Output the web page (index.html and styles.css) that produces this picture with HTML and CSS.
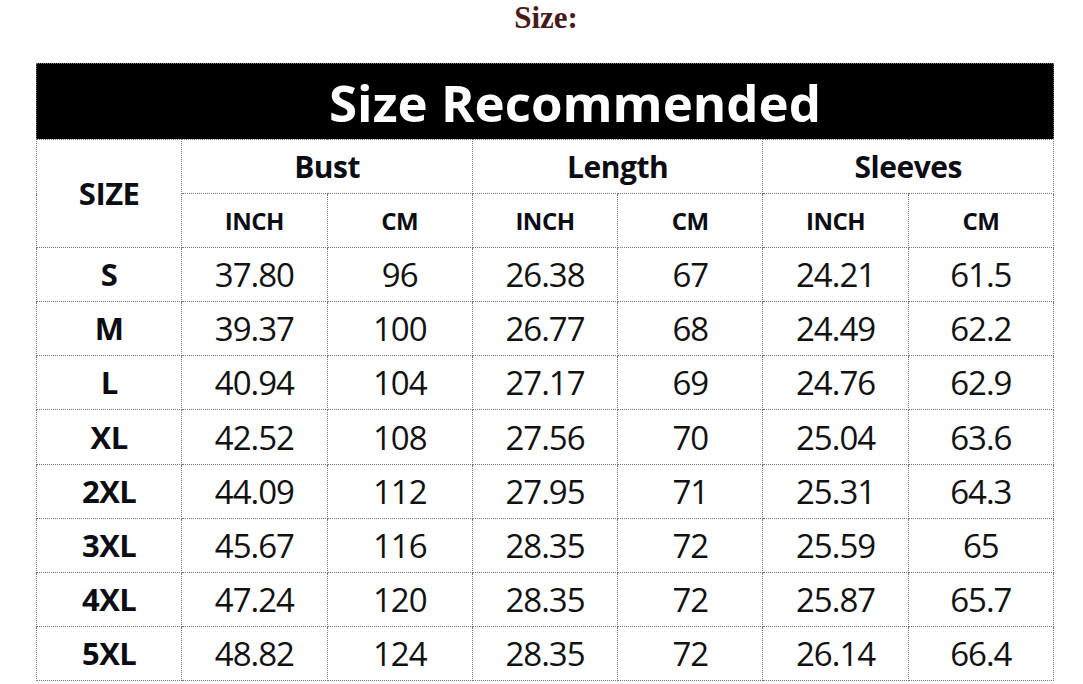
FILE: index.html
```html
<!DOCTYPE html>
<html>
<head>
<meta charset="utf-8">
<link rel="stylesheet" href="styles.css">
</head>
<body>
<h1 class="page-title">Size:</h1>
<div class="chart">
  <div class="band"><span class="band-text">Size Recommended</span></div>
  <table class="size-table">
    <colgroup>
      <col><col><col><col><col><col><col>
    </colgroup>
    <thead>
      <tr class="head1">
        <th rowspan="2" class="lbl-size">SIZE</th>
        <th colspan="2">Bust</th>
        <th colspan="2">Length</th>
        <th colspan="2">Sleeves</th>
      </tr>
      <tr class="head2">
        <th>INCH</th><th>CM</th><th>INCH</th><th>CM</th><th>INCH</th><th>CM</th>
      </tr>
    </thead>
    <tbody>
      <tr><th>S</th><td>37.80</td><td>96</td><td>26.38</td><td>67</td><td>24.21</td><td>61.5</td></tr>
      <tr><th>M</th><td>39.37</td><td>100</td><td>26.77</td><td>68</td><td>24.49</td><td>62.2</td></tr>
      <tr><th>L</th><td>40.94</td><td>104</td><td>27.17</td><td>69</td><td>24.76</td><td>62.9</td></tr>
      <tr><th>XL</th><td>42.52</td><td>108</td><td>27.56</td><td>70</td><td>25.04</td><td>63.6</td></tr>
      <tr><th>2XL</th><td>44.09</td><td>112</td><td>27.95</td><td>71</td><td>25.31</td><td>64.3</td></tr>
      <tr><th>3XL</th><td>45.67</td><td>116</td><td>28.35</td><td>72</td><td>25.59</td><td>65</td></tr>
      <tr><th>4XL</th><td>47.24</td><td>120</td><td>28.35</td><td>72</td><td>25.87</td><td>65.7</td></tr>
      <tr><th>5XL</th><td>48.82</td><td>124</td><td>28.35</td><td>72</td><td>26.14</td><td>66.4</td></tr>
    </tbody>
  </table>
</div>
</body>
</html>
```
FILE: styles.css
```css
html, body {
  margin: 0;
  padding: 0;
  background: #fff;
}
.page-title {
  margin: 0;
  height: 63px;
  padding-left: 9px;
  font-family: "Liberation Serif", serif;
  font-weight: bold;
  font-size: 31px;
  line-height: 36px;
  color: #4a1a1a;
  text-align: center;
}
.chart {
  margin-left: 36px;
  width: 1018px;
}
.band {
  box-sizing: border-box;
  height: 76px;
  background: #000;
  border: 1px dotted #777;
  border-bottom: none;
  padding-left: 60px;
  display: flex;
  align-items: center;
  justify-content: center;
}
.band-text {
  font-family: "Open Sans", sans-serif;
  font-weight: bold;
  font-size: 51px;
  line-height: 1;
  color: #fff;
  margin-top: 1px;
}
.size-table {
  width: 1018px;
  border-collapse: collapse;
  table-layout: fixed;
  font-family: "Open Sans", sans-serif;
  color: #111;
}
.size-table th,
.size-table td {
  border: 1px dotted #777;
  text-align: center;
  vertical-align: middle;
  padding: 0;
  line-height: 1;
}
.size-table tr {
  height: 54.1px;
}
.size-table th {
  font-weight: bold;
  color: #0c0c14;
}
.head1 th {
  font-size: 30px;
  letter-spacing: -0.5px;
}
.head2 th {
  font-size: 24px;
  letter-spacing: -0.5px;
}
.size-table .lbl-size {
  font-size: 31px;
}
tbody th {
  font-size: 31px;
  letter-spacing: -0.5px;
}
tbody td {
  font-size: 33px;
  letter-spacing: -1px;
  font-weight: normal;
}
```
